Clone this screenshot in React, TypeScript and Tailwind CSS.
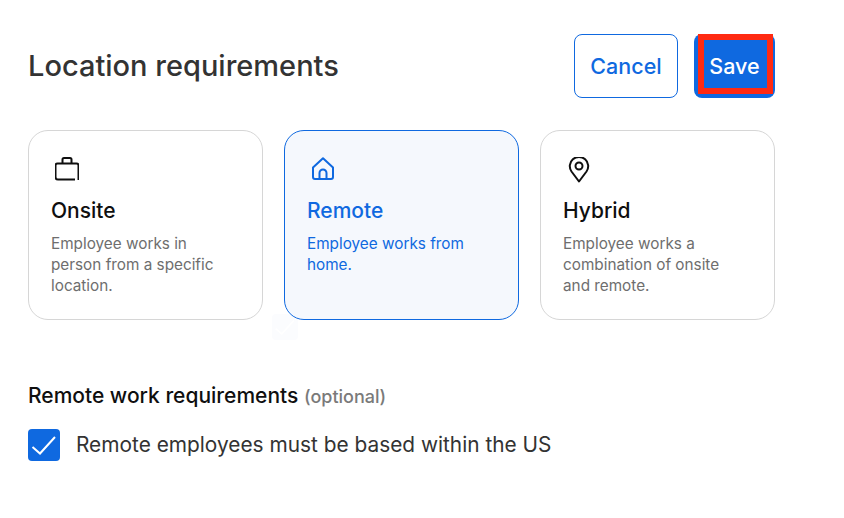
const font = { fontFamily: "Inter, 'Liberation Sans', sans-serif" };

function BagIcon() {
    return (
        <svg width="24" height="24" viewBox="0 0 24 24" fill="none" stroke="currentColor" strokeWidth="2">
            <path d="M23.5 23V8.5a2 2 0 0 0-2-2H2.5a2 2 0 0 0-2 2V20a2.5 2.5 0 0 0 2.5 2.5h17" />
            <path d="M7.5 6.5V2.5A1.5 1.5 0 0 1 9 1h6a1.5 1.5 0 0 1 1.5 1.5v4" />
        </svg>
    );
}

function HomeIcon() {
    return (
        <svg width="24" height="24" viewBox="0 0 24 24" fill="none" stroke="currentColor" strokeWidth="2" strokeLinejoin="round">
            <path d="M2 10.5 12 1.2l10 9.3V20a2 2 0 0 1-2 2H4a2 2 0 0 1-2-2z" />
            <path d="M8.5 22v-6a3.5 3.5 0 0 1 7 0v6" />
        </svg>
    );
}

function PinIcon() {
    return (
        <svg width="24" height="26" viewBox="0 0 24 26" fill="none" stroke="currentColor" strokeWidth="2" strokeLinejoin="round">
            <path d="M12 24.5 4.5 14.5A9.2 9.2 0 1 1 19.5 14.5z" />
            <circle cx="12" cy="9" r="3.5" />
        </svg>
    );
}

const cards = [
    { title: "Onsite", desc: "Employee works in person from a specific location.", icon: <BagIcon />, active: false },
    { title: "Remote", desc: "Employee works from home.", icon: <HomeIcon />, active: true },
    { title: "Hybrid", desc: "Employee works a combination of onsite and remote.", icon: <PinIcon />, active: false },
];

export default function App() {
    return (
        <div className="relative w-[844px] h-[518px] bg-white pt-[34px] pl-[28px] overflow-hidden" style={font}>
            {/* faint ghost checkbox sits behind the cards */}
            <div className="absolute left-[272px] top-[314px] w-[26px] h-[26px] rounded bg-[#fbfcfe]">
                <svg width="26" height="26" viewBox="0 0 32 32" fill="none" stroke="white" strokeWidth="2">
                    <path d="M4.5 18 12 24.5 27 8" />
                </svg>
            </div>
            <div className="w-[747px] flex items-center justify-between">
                <h1 className="text-[29px] leading-[64px] font-medium text-[#333333]">Location requirements</h1>
                <div className="flex gap-4">
                    <button className="w-[104px] h-[64px] rounded-lg border border-[#0f69e0] bg-white text-[#0f69e0] text-[21.5px] font-medium">
                        Cancel
                    </button>
                    <button className="relative w-[81px] h-[64px] rounded-lg bg-[#0f69e0] text-white text-[21.5px] font-medium">
                        Save
                        <span className="absolute left-[4px] top-0 w-[75px] h-[60px] border-[6px] border-[#ff2a12]" />
                    </button>
                </div>
            </div>
            <div className="relative mt-8 w-[747px] grid grid-cols-3 gap-[21px]">
                {cards.map((card) => (
                    <div
                        key={card.title}
                        className={`h-[190px] rounded-[20px] border pt-[26px] pl-[22px] pr-[36px] ${card.active ? "border-[#0f69e0] bg-[#f5f8fd] text-[#0f69e0]" : "border-[#d6d6d6] bg-white text-[#0f0f0f]"}`}
                    >
                        <div className="h-[26px] ml-1">{card.icon}</div>
                        <h2 className="mt-[14px] text-[21px] leading-[28px] font-medium">{card.title}</h2>
                        <p className={`mt-[8px] text-[15.3px] leading-[21px] ${card.active ? "text-[#0f69e0]" : "text-[#6e6e6e]"}`}>
                            {card.desc}
                        </p>
                    </div>
                ))}
            </div>
            <h3 className="mt-[62px] text-[21px] leading-[28px] font-medium text-[#0f0f0f]">
                Remote work requirements <span className="text-lg font-medium text-[#7a7a7a]">(optional)</span>
            </h3>
            <div className="mt-[18px] flex items-center gap-4">
                <div className="w-8 h-8 rounded bg-[#0f69e0]">
                    <svg width="32" height="32" viewBox="0 0 32 32" fill="none" stroke="white" strokeWidth="2">
                        <path d="M4.5 18 12 24.5 27 8" />
                    </svg>
                </div>
                <span className="text-[20.85px] text-[#333333]">Remote employees must be based within the US</span>
            </div>
        </div>
    );
}
